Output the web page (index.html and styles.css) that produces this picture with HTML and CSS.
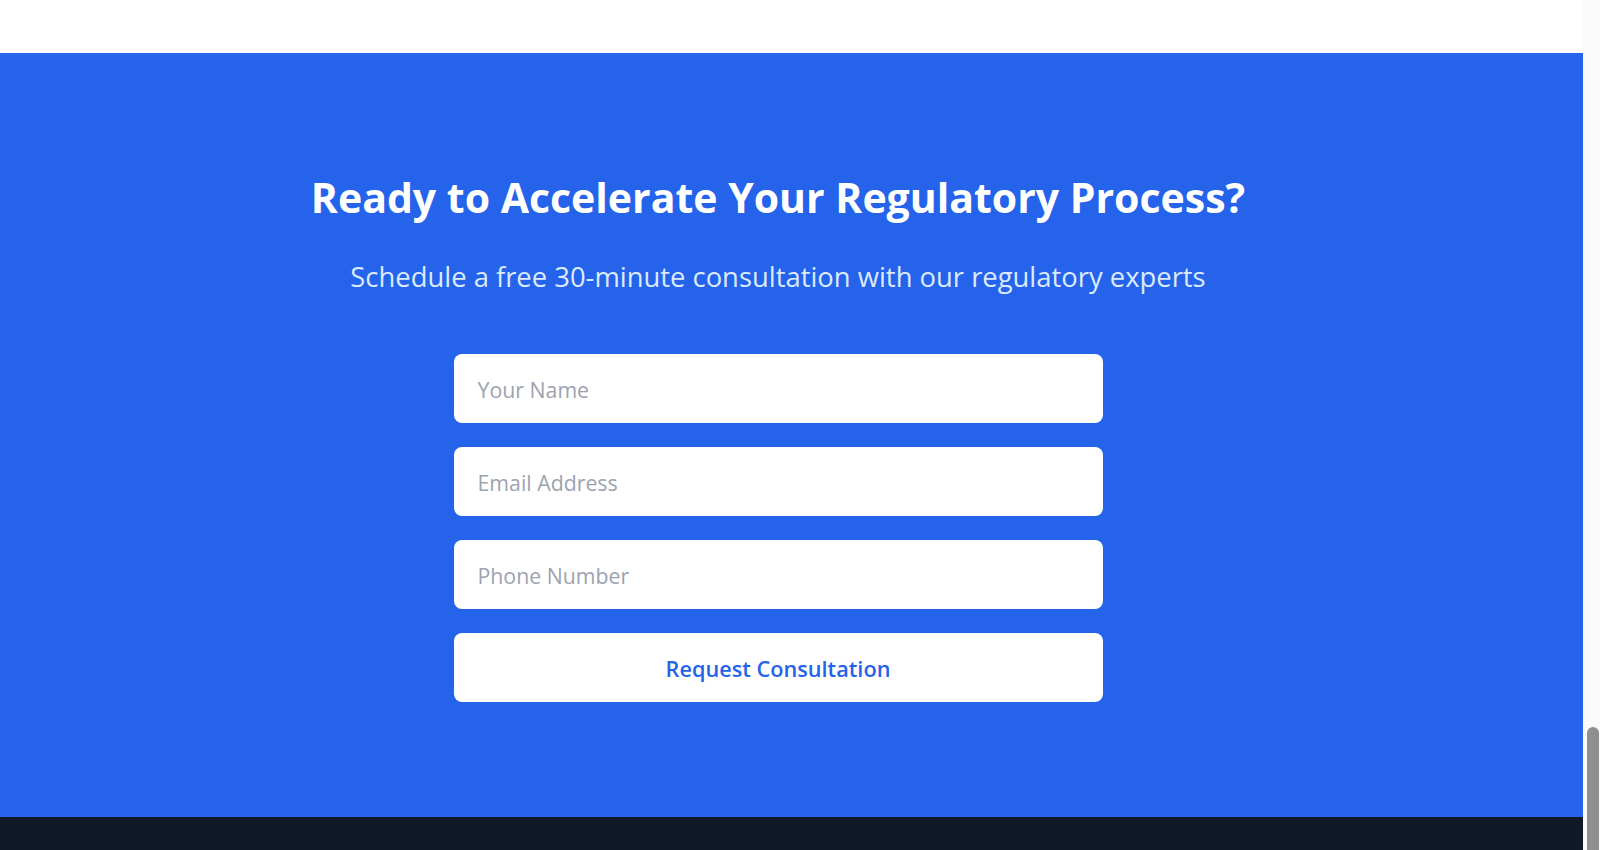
FILE: index.html
```html
<!DOCTYPE html>
<html lang="en">
<head>
<meta charset="utf-8">
<title>Request a Consultation</title>
<link rel="stylesheet" href="styles.css">
</head>
<body>
<div class="page">
  <div class="prev-section" aria-hidden="true"></div>
  <section class="cta">
    <div class="cta-inner">
      <h2 class="cta-title">Ready to Accelerate Your Regulatory Process?</h2>
      <p class="cta-subtitle">Schedule a free 30-minute consultation with our regulatory experts</p>
      <form class="cta-form">
        <input class="field" type="text" placeholder="Your Name">
        <input class="field" type="email" placeholder="Email Address">
        <input class="field" type="tel" placeholder="Phone Number">
        <button class="submit" type="button">Request Consultation</button>
      </form>
    </div>
  </section>
  <footer class="footer"></footer>
</div>
<div class="scrollbar" aria-hidden="true">
  <div class="scrollbar-thumb"></div>
</div>
</body>
</html>
```
FILE: styles.css
```css
html, body {
  margin: 0;
  padding: 0;
  height: 100%;
  overflow: hidden;
}

body {
  display: flex;
  background: #ffffff;
  font-family: "Open Sans", "Noto Sans", sans-serif;
}

.page {
  flex: 1;
  min-width: 0;
  display: flex;
  flex-direction: column;
}

.prev-section {
  height: 53px;
  background: #ffffff;
}

.cta {
  background: #2563eb;
  height: 764px;
  box-sizing: border-box;
  padding: 122px 27px 0 0;
}

.cta-inner {
  display: flex;
  flex-direction: column;
  align-items: center;
  text-align: center;
}

.cta-title {
  margin: 0;
  font-size: 41px;
  line-height: 44px;
  font-weight: 700;
  color: #ffffff;
}

.cta-subtitle {
  margin: 40px 0 0;
  font-size: 27.4px;
  line-height: 36px;
  color: #dbeafe;
}

.cta-form {
  margin-top: 59px;
  width: 649px;
  display: flex;
  flex-direction: column;
  gap: 24px;
}

.field {
  display: block;
  width: 100%;
  box-sizing: border-box;
  height: 69px;
  padding: 2px 24px 0;
  border: none;
  border-radius: 8px;
  background: #ffffff;
  font-family: inherit;
  font-size: 21.3px;
  color: #111827;
  outline: none;
}

.field::placeholder {
  color: #9ca3af;
}

.submit {
  display: block;
  width: 100%;
  height: 69px;
  padding-top: 2px;
  border: none;
  border-radius: 8px;
  background: #ffffff;
  color: #2563eb;
  font-family: inherit;
  font-size: 21.7px;
  font-weight: 600;
  cursor: pointer;
}

.footer {
  flex: 1;
  background: #111827;
}

.scrollbar {
  flex: none;
  width: 17px;
  background: #fafafa;
  display: flex;
  flex-direction: column;
  justify-content: flex-end;
}

.scrollbar-thumb {
  height: 123px;
  margin-left: 4px;
  margin-right: 1px;
  background: #8f8f8f;
  border-radius: 6px 6px 0 0;
}
```
